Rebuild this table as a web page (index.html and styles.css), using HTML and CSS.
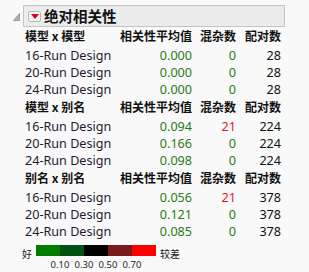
FILE: index.html
```html
<!DOCTYPE html>
<html>
<head>
<meta charset="utf-8">
<link rel="stylesheet" href="styles.css">
</head>
<body>
<div class="report">
  <div class="outline">
    <svg class="disclose" width="7" height="8" viewBox="0 0 7 8"><path d="M6.5 0.5 L6.5 7.5 L0.5 7.5 Z" fill="#b4b4b4" stroke="#8c8c8c" stroke-width="0.8"/></svg>
    <div class="titlebox">
      <span class="redbtn"><svg width="8" height="5" viewBox="0 0 8 5"><path d="M0 0 L8 0 L4 5 Z" fill="#e0001a"/></svg></span>
      <span class="title">绝对相关性</span>
    </div>
  </div>

  <div class="group">
    <div class="row head"><span class="c1">模型 x 模型</span><span class="c2">相关性平均值</span><span class="c3">混杂数</span><span class="c4">配对数</span></div>
    <div class="row"><span class="c1">16-Run Design</span><span class="c2 g">0.000</span><span class="c3 g">0</span><span class="c4">28</span></div>
    <div class="row"><span class="c1">20-Run Design</span><span class="c2 g">0.000</span><span class="c3 g">0</span><span class="c4">28</span></div>
    <div class="row"><span class="c1">24-Run Design</span><span class="c2 g">0.000</span><span class="c3 g">0</span><span class="c4">28</span></div>
  </div>

  <div class="group">
    <div class="row head"><span class="c1">模型 x 别名</span><span class="c2">相关性平均值</span><span class="c3">混杂数</span><span class="c4">配对数</span></div>
    <div class="row"><span class="c1">16-Run Design</span><span class="c2 g">0.094</span><span class="c3 r">21</span><span class="c4">224</span></div>
    <div class="row"><span class="c1">20-Run Design</span><span class="c2 g">0.166</span><span class="c3 g">0</span><span class="c4">224</span></div>
    <div class="row"><span class="c1">24-Run Design</span><span class="c2 g">0.098</span><span class="c3 g">0</span><span class="c4">224</span></div>
  </div>

  <div class="group">
    <div class="row head"><span class="c1">别名 x 别名</span><span class="c2">相关性平均值</span><span class="c3">混杂数</span><span class="c4">配对数</span></div>
    <div class="row"><span class="c1">16-Run Design</span><span class="c2 g">0.056</span><span class="c3 r">21</span><span class="c4">378</span></div>
    <div class="row"><span class="c1">20-Run Design</span><span class="c2 g">0.121</span><span class="c3 g">0</span><span class="c4">378</span></div>
    <div class="row"><span class="c1">24-Run Design</span><span class="c2 g">0.085</span><span class="c3 g">0</span><span class="c4">378</span></div>
  </div>

  <div class="legend">
    <div class="lrow">
      <span class="lgood">好</span>
      <div class="bar">
        <span class="s s1"></span><span class="s s2"></span><span class="s s3"></span><span class="s s4"></span><span class="s s5"></span>
      </div>
      <span class="lbad">较差</span>
    </div>
    <div class="ticks"><span>0.10</span><span>0.30</span><span>0.50</span><span>0.70</span></div>
  </div>
</div>
</body>
</html>
```

FILE: styles.css
```css
html, body {
  margin: 0;
  padding: 0;
  background: #f9f9f9;
}
body {
  font-family: "Noto Sans", "Noto Sans CJK SC", sans-serif;
  color: #1a1a1a;
  width: 309px;
  height: 272px;
  overflow: hidden;
}
.report {
  padding-top: 5px;
}
.outline {
  display: flex;
  align-items: center;
  height: 22px;
}
.disclose {
  margin-left: 13px;
  margin-right: 3px;
  margin-top: 2px;
}
.titlebox {
  width: 260px;
  height: 20px;
  border: 1px solid #c4c4c4;
  background: #ececec;
  display: flex;
  align-items: center;
}
.redbtn {
  width: 11px;
  height: 9px;
  margin-left: 4px;
  border: 1px solid #b8b8b8;
  border-radius: 2px;
  background: #f4f4f4;
  display: flex;
  align-items: center;
  justify-content: center;
}
.redbtn svg { display: block; }
.title {
  margin-left: 3px;
  font-family: "Noto Sans CJK SC", sans-serif;
  font-weight: bold;
  font-size: 14.5px;
  color: #111;
  line-height: 20px;
}
.group {
  padding-left: 25px;
}
.row {
  display: grid;
  grid-template-columns: 95px 72px 44px 45px;
  height: 17px;
  line-height: 17px;
  font-size: 12.6px;
  white-space: nowrap;
}
.row.head {
  font-family: "Noto Sans CJK SC", sans-serif;
  font-weight: bold;
  font-size: 12px;
  margin-bottom: 3px;
  color: #111;
}
.c2, .c3, .c4 { text-align: right; }
.row:not(.head) .c1 { color: #1c1c30; }
.g { color: #2a7a14; }
.r { color: #f0102a; }
.row:not(.head) .c4 { color: #111; }
.legend {
  margin-top: 5px;
  padding-left: 22px;
}
.lrow {
  display: flex;
  align-items: center;
  height: 11px;
}
.lgood, .lbad {
  font-family: "Noto Sans CJK SC", sans-serif;
  font-size: 10px;
  color: #222;
  line-height: 11px;
}
.lgood { width: 14px; margin-top: 6px; }
.lbad { margin-left: 4px; margin-top: 6px; }
.bar {
  display: flex;
  height: 11px;
}
.s { width: 24px; height: 11px; }
.s1 { background: #007c00; }
.s2 { background: #005212; }
.s3 { background: #000000; }
.s4 { background: #7a1a1a; }
.s5 { background: #ff0000; }
.ticks {
  display: flex;
  padding-left: 26px;
  margin-top: 3px;
  font-size: 9.5px;
  line-height: 11px;
  color: #222;
}
.ticks span { width: 24px; text-align: center; }
```
